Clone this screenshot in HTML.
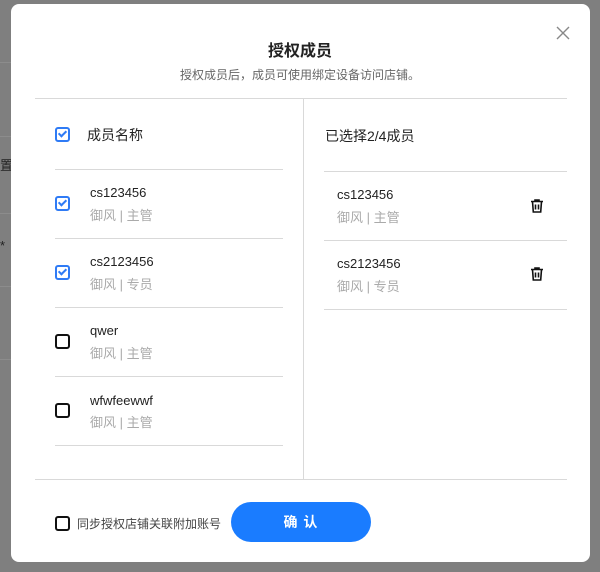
<!DOCTYPE html>
<html><head><meta charset="utf-8"><style>
body{margin:0;width:600px;height:572px;background:#7f7f7f;position:relative;overflow:hidden;font-family:"Liberation Sans","Noto Sans CJK SC",sans-serif;}
.bgl{position:absolute;left:0;width:11px;height:1px;background:#8c8c8c}
.modal{position:absolute;left:11px;top:4px;width:579px;height:558px;background:#fff;border-radius:8px;}
.a{position:absolute}
.hl{position:absolute;height:1px;background:#d9d9d9}
.cb{position:absolute;width:11px;height:11px;border:2px solid #111;border-radius:3px}
.cb.on{border-color:#2f7bf5}
.cb.on::after{content:"";position:absolute;left:3px;top:0px;width:3px;height:6px;border:solid #2f7bf5;border-width:0 2px 2px 0;transform:rotate(45deg)}
.nm{position:absolute;font-size:13px;color:#222}
.sb{position:absolute;font-size:13px;color:#aaa}
</style></head><body>
<div class="bgl" style="top:62px"></div><div class="bgl" style="top:136px"></div><div class="bgl" style="top:213px"></div><div class="bgl" style="top:286px"></div><div class="bgl" style="top:359px"></div>
<div class="a" style="left:0;top:155px;font-size:13px;color:#222">置</div>
<div class="a" style="left:0;top:238px;font-size:13px;color:#222">*</div>
<div class="modal"></div>
<svg class="a" style="left:556px;top:26px" width="14" height="14"><path d="M1 1L13 13M13 1L1 13" stroke="#888" stroke-width="1.4"/></svg>
<div class="a" style="left:0;width:600px;top:37px;text-align:center;font-size:16px;font-weight:bold;color:#222">授权成员</div>
<div class="a" style="left:0;width:600px;top:66px;text-align:center;font-size:12px;color:#666">授权成员后，成员可使用绑定设备访问店铺。</div>
<div class="hl" style="left:35px;top:98px;width:532px"></div>
<div class="a" style="left:303px;top:98px;width:1px;height:381px;background:#d9d9d9"></div>
<div class="hl" style="left:35px;top:479px;width:532px"></div>

<div class="cb on" style="left:55px;top:127px"></div>
<div class="nm" style="left:87px;top:125px;font-size:14px">成员名称</div>
<div class="hl" style="left:55px;top:169px;width:228px"></div>

<div class="cb on" style="left:55px;top:196px"></div>
<div class="nm" style="left:90px;top:185px">cs123456</div><div class="sb" style="left:90px;top:205px">御风 | 主管</div>
<div class="hl" style="left:55px;top:238px;width:228px"></div>
<div class="cb on" style="left:55px;top:265px"></div>
<div class="nm" style="left:90px;top:254px">cs2123456</div><div class="sb" style="left:90px;top:274px">御风 | 专员</div>
<div class="hl" style="left:55px;top:307px;width:228px"></div>
<div class="cb" style="left:55px;top:334px"></div>
<div class="nm" style="left:90px;top:323px">qwer</div><div class="sb" style="left:90px;top:343px">御风 | 主管</div>
<div class="hl" style="left:55px;top:376px;width:228px"></div>
<div class="cb" style="left:55px;top:403px"></div>
<div class="nm" style="left:90px;top:393px">wfwfeewwf</div><div class="sb" style="left:90px;top:412px">御风 | 主管</div>
<div class="hl" style="left:55px;top:445px;width:228px"></div>

<div class="nm" style="left:325px;top:126px;font-size:14px">已选择2/4成员</div>
<div class="hl" style="left:324px;top:171px;width:243px"></div>
<div class="nm" style="left:337px;top:187px">cs123456</div><div class="sb" style="left:337px;top:207px">御风 | 主管</div>
<div class="hl" style="left:324px;top:240px;width:243px"></div>
<div class="nm" style="left:337px;top:256px">cs2123456</div><div class="sb" style="left:337px;top:276px">御风 | 专员</div>
<div class="hl" style="left:324px;top:309px;width:243px"></div>
<svg class="a" style="left:529px;top:198px" width="16" height="16"><path d="M2 3.5H14M6 3.5V2H10V3.5M3.5 3.5L4.3 14H11.7L12.5 3.5M6.5 6.5V11.5M9.5 6.5V11.5" stroke="#111" stroke-width="1.6" fill="none"/></svg>
<svg class="a" style="left:529px;top:266px" width="16" height="16"><path d="M2 3.5H14M6 3.5V2H10V3.5M3.5 3.5L4.3 14H11.7L12.5 3.5M6.5 6.5V11.5M9.5 6.5V11.5" stroke="#111" stroke-width="1.6" fill="none"/></svg>

<div class="cb" style="left:55px;top:516px"></div>
<div class="a" style="left:77px;top:515px;font-size:12px;color:#444">同步授权店铺关联附加账号</div>
<div class="a" style="left:231px;top:502px;width:140px;height:40px;border-radius:20px;background:#1a7cff;color:#fff;font-size:14px;font-weight:bold;text-align:center;line-height:40px;letter-spacing:1px">确 认</div>
</body></html>
